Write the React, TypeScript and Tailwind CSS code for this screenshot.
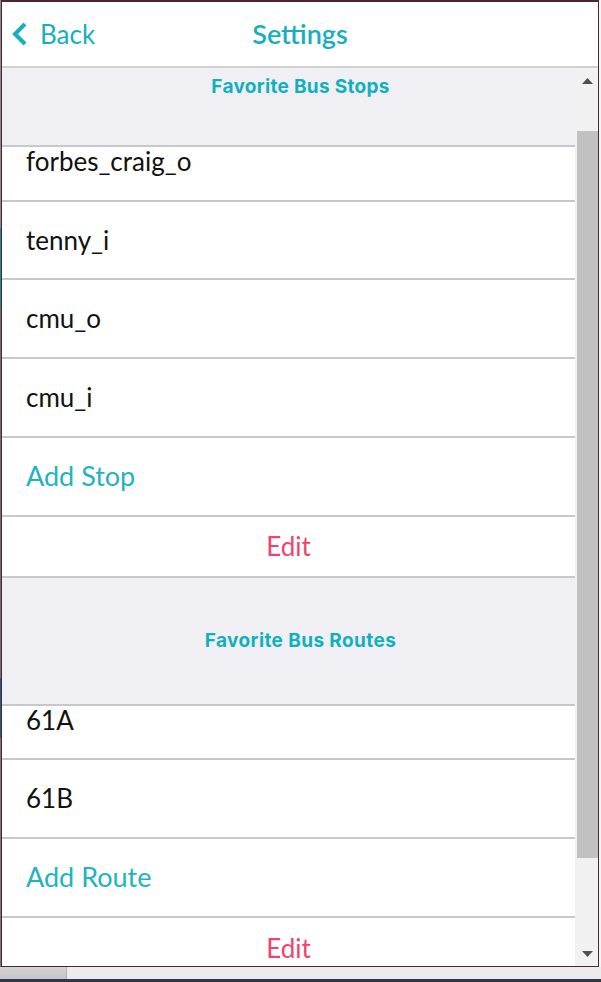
import type { ReactNode } from 'react';

const FONT = { fontFamily: 'Lato, "Open Sans", sans-serif' };
const HEAD_FONT = { fontFamily: 'Inter, "Open Sans", sans-serif' };

function Row({ children, clip, h = 'h-[79px]' }: { children: ReactNode; clip?: string; h?: string }) {
  if (clip) {
    return (
      <div className={`${clip} shrink-0 overflow-hidden border-b-2 border-[#c8c7cc] bg-white`}>
        <div className="-mt-[24px] flex h-[77px] items-center pl-[24px]">{children}</div>
      </div>
    );
  }
  return (
    <div className={`${h} flex shrink-0 items-center border-b-2 border-[#c8c7cc] bg-white pl-[24px]`}>
      {children}
    </div>
  );
}

function Item({ label }: { label: string }) {
  return <span className="text-[26px] text-[#111]">{label}</span>;
}

function AddRow({ label }: { label: string }) {
  return <span className="text-[27px] text-[#22b3bf]">{label}</span>;
}

function EditRow({ last }: { last?: boolean }) {
  return (
    <div
      className={
        last
          ? 'flex h-[60px] shrink-0 items-center justify-center bg-white'
          : 'flex h-[61px] shrink-0 items-center justify-center border-b-2 border-[#c8c7cc] bg-white'
      }
    >
      <span className="text-[26px] text-[#ef4470]">Edit</span>
    </div>
  );
}

export default function App() {
  return (
    <div className="flex h-[982px] w-[601px] flex-col overflow-hidden bg-[#efefef]" style={FONT}>
      <div className="flex h-[967px] shrink-0">
        {/* backdrop peeking at the left edge */}
        <div className="flex w-px flex-col">
          <div className="h-[228px] bg-[#8a8a8a]" />
          <div className="h-[80px] bg-[#138f95]" />
          <div className="h-[370px] bg-[#6f6f6f]" />
          <div className="h-[60px] bg-[#1f5d8c]" />
          <div className="flex-1 bg-[#777]" />
        </div>

        <div className="flex w-[598px] flex-col border-x border-t-2 border-b border-[#4f2433] bg-white">
          <header className="relative flex h-[66px] shrink-0 items-center justify-center border-b-2 border-[#d0d0d0] bg-white">
            <div className="absolute left-[10px] top-0 flex h-full items-center gap-[12px] text-[#17afbd]">
              <svg width="16" height="24" viewBox="0 0 16 24">
                <polyline points="13,2 3,12 13,22" fill="none" stroke="currentColor" strokeWidth="4" />
              </svg>
              <span className="text-[26px]">Back</span>
            </div>
            <h1 className="text-[27px] font-semibold text-[#17afbd]">Settings</h1>
          </header>

          <div className="flex min-h-0 flex-1">
            <div className="flex min-w-0 flex-1 flex-col overflow-hidden">
              <div
                className="h-[79px] shrink-0 border-b-2 border-[#c8c7cc] bg-[#efeff4] pl-[24px] pt-[5px] text-center"
                style={HEAD_FONT}
              >
                <span className="text-[19px] font-bold tracking-[0.3px] text-[#12b0bd]">Favorite Bus Stops</span>
              </div>
              <Row clip="h-[55px]">
                <Item label="forbes_craig_o" />
              </Row>
              <Row h="h-[78px]">
                <Item label="tenny_i" />
              </Row>
              <Row>
                <Item label="cmu_o" />
              </Row>
              <Row>
                <Item label="cmu_i" />
              </Row>
              <Row>
                <AddRow label="Add Stop" />
              </Row>
              <EditRow />

              <div
                className="flex h-[128px] shrink-0 items-center justify-center border-b-2 border-[#c8c7cc] bg-[#efeff4] pl-[24px]"
                style={HEAD_FONT}
              >
                <span className="text-[19px] font-bold tracking-[0.4px] text-[#12b0bd]">Favorite Bus Routes</span>
              </div>
              <Row clip="h-[54px]">
                <Item label="61A" />
              </Row>
              <Row>
                <Item label="61B" />
              </Row>
              <Row>
                <AddRow label="Add Route" />
              </Row>
              <EditRow last />
            </div>

            {/* scrollbar */}
            <div className="flex w-[23px] shrink-0 flex-col bg-[#f1f1f1] pl-[2px]">
              <div className="flex h-[63px] shrink-0 justify-center pt-[10px]">
                <svg width="11" height="6" viewBox="0 0 11 6">
                  <polygon points="5.5,0 11,6 0,6" fill="#505050" />
                </svg>
              </div>
              <div className="h-[727px] shrink-0 bg-[#c1c1c1]" />
              <div className="flex justify-center pt-[93px]">
                <svg width="11" height="6" viewBox="0 0 11 6">
                  <polygon points="0,0 11,0 5.5,6" fill="#505050" />
                </svg>
              </div>
            </div>
          </div>
        </div>

        <div className="w-[2px] bg-[#f4f4f4]" />
      </div>

      <div className="flex h-[12px] shrink-0">
        <div className="w-[66px] bg-gradient-to-b from-[#d4d4d4] to-[#c6c6c6]" />
        <div className="w-px bg-[#b0b0b0]" />
        <div className="flex-1 bg-[#ececec]" />
      </div>
      <div className="h-[3px] shrink-0 bg-[#2e3945]" />
    </div>
  );
}
